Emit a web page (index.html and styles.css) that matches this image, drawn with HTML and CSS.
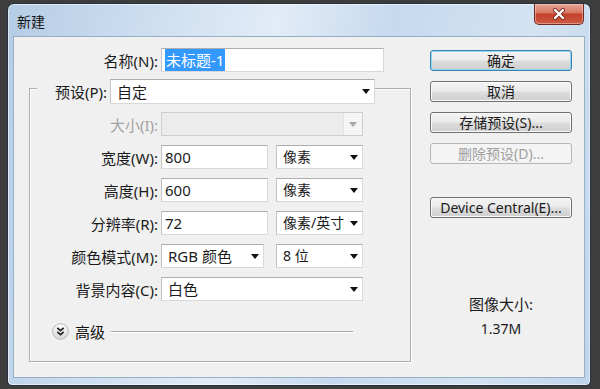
FILE: index.html
```html
<!DOCTYPE html>
<html lang="zh-CN">
<head>
    <meta charset="UTF-8" />
    <title>新建</title>
    <link rel="stylesheet" href="styles.css">
</head>
<body>

    <div class="window">
        <div class="titlebar">
            <span class="title">新建</span>
            <div class="close">
                <svg width="14" height="12" viewBox="0 0 14 12">
                    <path d="M3 2 L11 10 M11 2 L3 10" stroke="#7a2a20" stroke-width="4" stroke-linecap="round"/>
                    <path d="M3 2 L11 10 M11 2 L3 10" stroke="#fff" stroke-width="2.4" stroke-linecap="round"/>
                </svg>
            </div>
        </div>

        <div class="client">
            <div class="main">
                <div class="name-row">
                    <label class="label">名称(N):</label>
                    <div class="input"><span class="selected">未标题-1</span></div>
                </div>

                <div class="group">
                    <div class="legend">
                        <label class="label">预设(P):</label>
                        <div class="select">自定<i class="arrow"></i></div>
                    </div>

                    <div class="rows">
                        <label class="label off">大小(I):</label>
                        <div class="fields">
                            <div class="select disabled w-full"><span class="drop"><i class="arrow"></i></span></div>
                        </div>

                        <label class="label">宽度(W):</label>
                        <div class="fields">
                            <div class="input w-num">800</div>
                            <div class="select w-unit">像素<i class="arrow"></i></div>
                        </div>

                        <label class="label">高度(H):</label>
                        <div class="fields">
                            <div class="input w-num">600</div>
                            <div class="select w-unit">像素<i class="arrow"></i></div>
                        </div>

                        <label class="label">分辨率(R):</label>
                        <div class="fields">
                            <div class="input w-num">72</div>
                            <div class="select w-unit">像素/英寸<i class="arrow"></i></div>
                        </div>

                        <label class="label">颜色模式(M):</label>
                        <div class="fields">
                            <div class="select w-mode">RGB 颜色<i class="arrow"></i></div>
                            <div class="select w-unit">8 位<i class="arrow"></i></div>
                        </div>

                        <label class="label">背景内容(C):</label>
                        <div class="fields">
                            <div class="select w-full">白色<i class="arrow"></i></div>
                        </div>
                    </div>

                    <div class="advanced">
                        <svg width="17" height="17" viewBox="0 0 17 17">
                            <defs>
                                <linearGradient id="knob" x1="0" y1="0" x2="0" y2="1">
                                    <stop offset="0" stop-color="#ffffff"/>
                                    <stop offset="1" stop-color="#d6d6d6"/>
                                </linearGradient>
                            </defs>
                            <circle cx="8.5" cy="8.5" r="7.8" fill="url(#knob)" stroke="#b4b4b4"/>
                            <path d="M5.3 4.8 L8.5 7.6 L11.7 4.8 M5.3 8.8 L8.5 11.6 L11.7 8.8" fill="none" stroke="#222" stroke-width="1.7"/>
                        </svg>
                        <span class="adv-text">高级</span>
                        <span class="adv-line"></span>
                    </div>
                </div>
            </div>

            <div class="side">
                <button class="btn default">确定</button>
                <button class="btn">取消</button>
                <button class="btn">存储预设(S)...</button>
                <button class="btn" disabled>删除预设(D)...</button>
                <button class="btn device">Device Central(E)...</button>
                <div class="info">
                    <div>图像大小:</div>
                    <div class="size">1.37M</div>
                </div>
            </div>
        </div>
    </div>

</body>
</html>
```

FILE: styles.css
```css
body {
    margin: 0;
    width: 600px;
    height: 389px;
    overflow: hidden;
    background-color: #3d3d3d;
    font-family: "Noto Sans", "Noto Sans CJK SC", sans-serif;
    font-size: 15px;
    color: #1b1b1b;
}
.window {
    margin: 3px 0 0 7px;
    width: 584px;
    height: 383px;
    box-sizing: border-box;
    border: 1px solid #26313d;
    border-radius: 7px 7px 5px 5px;
    padding: 0 6px 8px;
    display: flex;
    flex-direction: column;
    background: linear-gradient(100deg, #b5cce5 0%, #cddef0 22%, #e2ecf7 42%, #c6d9ee 60%, #d4e3f2 82%, #bfd4eb 100%);
    box-shadow: inset 0 0 0 1px rgba(255, 255, 255, 0.55);
}
.titlebar {
    height: 33px;
    flex: none;
    display: flex;
    justify-content: space-between;
    align-items: center;
    padding-left: 3px;
}
.title {
    font-size: 14px;
    color: #111;
}
.close {
    align-self: flex-start;
    width: 50px;
    height: 21px;
    box-sizing: border-box;
    border: 1px solid #6e2b24;
    border-top: none;
    border-radius: 0 0 5px 5px;
    display: flex;
    justify-content: center;
    align-items: center;
    background: linear-gradient(#e6a595 0%, #d87a66 42%, #c4412b 52%, #cc5a44 100%);
    box-shadow: inset 0 0 0 1px rgba(255, 220, 210, 0.45);
}
.client {
    height: 340px;
    flex: none;
    display: flex;
    background-color: #f0f0f0;
    box-shadow: 0 0 0 1px #98afc8;
}
.main {
    width: 397px;
    flex: none;
}
.label {
    text-align: right;
    white-space: nowrap;
}
.label.off {
    color: #a3a3a3;
}
.name-row {
    display: grid;
    grid-template-columns: 144px 223px;
    column-gap: 3px;
    align-items: center;
    height: 24px;
    margin-top: 11px;
}
.input, .select {
    height: 24px;
    box-sizing: border-box;
    background-color: #fff;
    border: 1px solid #d8d8d8;
    border-top-color: #adadad;
    border-left-color: #c4c4c4;
    line-height: 22px;
    white-space: nowrap;
}
.input {
    padding-left: 3px;
}
.selected {
    background-color: #3399ff;
    color: #fff;
    padding: 1px 1px;
}
.select {
    display: flex;
    justify-content: space-between;
    align-items: center;
    padding: 0 4px 0 6px;
}
.arrow {
    flex: none;
    width: 0;
    height: 0;
    border-left: 4.5px solid transparent;
    border-right: 4.5px solid transparent;
    border-top: 5px solid #111;
}
.select.disabled {
    background-color: #ececec;
    border-color: #cdcdcd;
    padding: 0;
    justify-content: flex-end;
}
.drop {
    width: 18px;
    height: 100%;
    display: flex;
    justify-content: center;
    align-items: center;
    background-color: #f5f5f5;
    border-left: 1px solid #e2e2e2;
}
.drop .arrow {
    border-top-color: #a8a8a8;
}
.group {
    margin: 16px 0 0 15px;
    width: 382px;
    height: 274px;
    box-sizing: border-box;
    border: 1px solid #adadad;
    box-shadow: inset 1px 1px 0 #fff, 1px 1px 0 #fff;
}
.legend {
    display: grid;
    grid-template-columns: 70px 265px;
    column-gap: 3px;
    align-items: center;
    width: max-content;
    height: 25px;
    margin: -10px 0 0 7px;
    background-color: #f0f0f0;
}
.legend .select {
    height: 25px;
}
.rows {
    display: grid;
    grid-template-columns: 128px auto;
    grid-auto-rows: 24px;
    column-gap: 3px;
    row-gap: 9px;
    align-items: center;
    margin-top: 8px;
}
.fields {
    display: flex;
    gap: 8px;
}
.w-full {
    width: 202px;
}
.w-num {
    width: 107px;
}
.w-unit {
    width: 87px;
    font-size: 14px;
}
.w-mode {
    width: 103px;
    margin-right: 4px;
}
.advanced {
    display: flex;
    align-items: center;
    gap: 6px;
    width: 301px;
    height: 17px;
    margin: 22px 0 0 22px;
}
.advanced svg {
    flex: none;
}
.adv-text {
    color: #111;
}
.adv-line {
    flex: 1;
    height: 0;
    border-top: 1px solid #a6a6a6;
    border-bottom: 1px solid #fff;
}
.side {
    margin-left: 19px;
    width: 142px;
    padding-top: 13px;
    display: flex;
    flex-direction: column;
    gap: 10px;
}
.btn {
    height: 21px;
    padding: 0;
    font-family: "Noto Sans", "Noto Sans CJK SC", sans-serif;
    font-size: 14px;
    line-height: 19px;
    color: #1b1b1b;
    border: 1px solid #707070;
    border-radius: 3px;
    background: linear-gradient(#f3f3f3 0%, #ebebeb 48%, #dddddd 52%, #cfcfcf 100%);
    box-shadow: inset 0 0 0 1px #fafafa;
}
.btn.default {
    border-color: #3c7fb1;
    box-shadow: inset 0 0 0 1px #8fd8f2;
}
.btn:disabled {
    color: #a0a0a0;
    border-color: #b3b7ba;
    background: #f4f4f4;
    box-shadow: none;
}
.btn.device {
    margin-top: 23px;
}
.info {
    margin-top: 66px;
    text-align: center;
    line-height: 20px;
    font-size: 15px;
}
.info .size {
    margin-top: 5px;
    font-size: 14px;
}
```
